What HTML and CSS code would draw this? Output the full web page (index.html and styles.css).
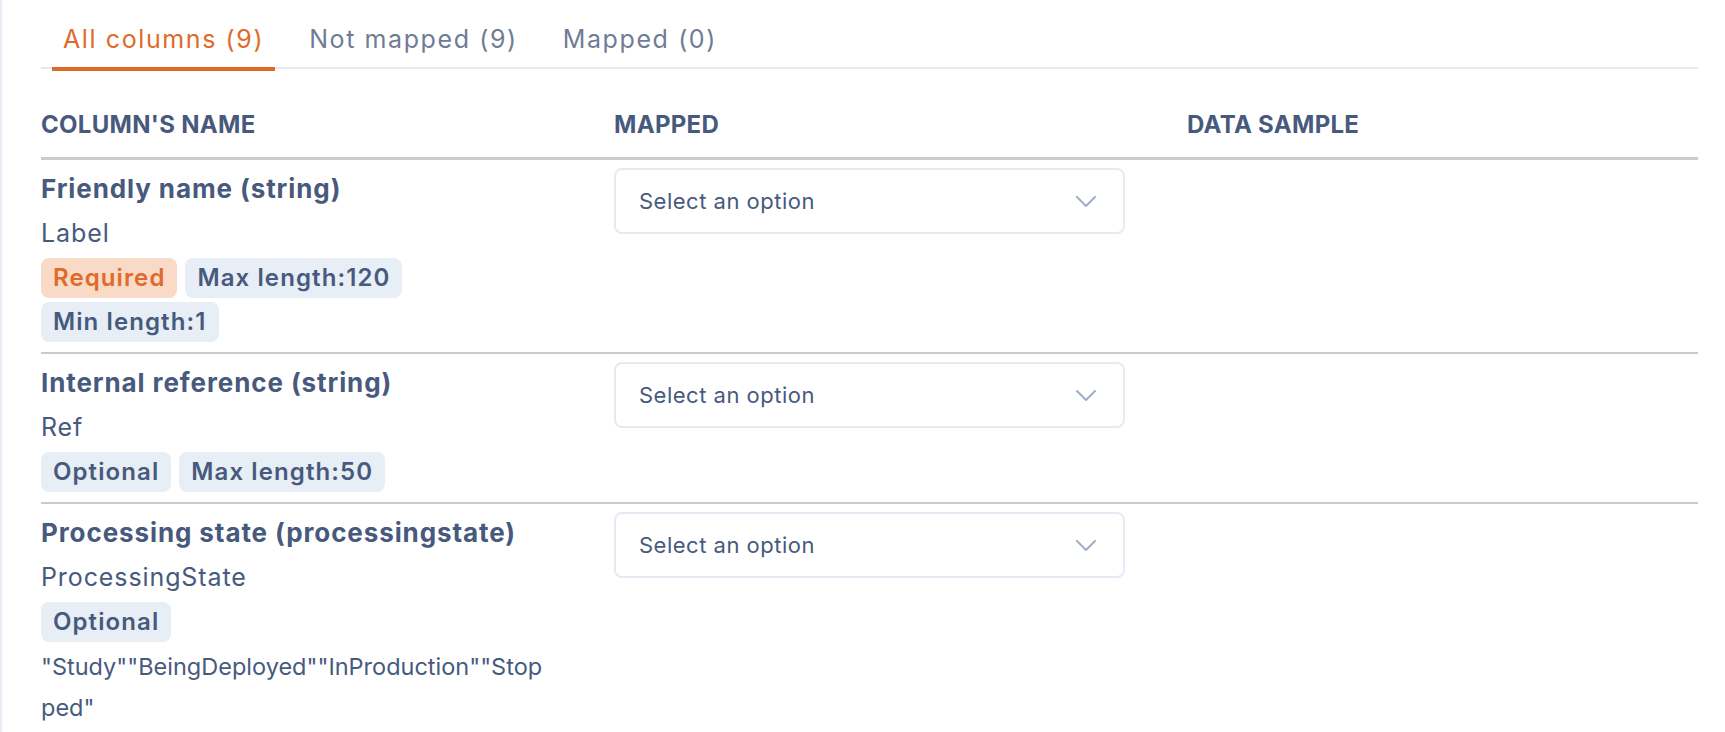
FILE: index.html
```html
<!DOCTYPE html>
<html lang="en">
<head>
<meta charset="utf-8">
<title>Column mapping</title>
<link rel="stylesheet" href="styles.css">
</head>
<body>
<div class="page">
  <nav class="tabs">
    <a class="tab active">All columns (9)</a>
    <a class="tab">Not mapped (9)</a>
    <a class="tab">Mapped (0)</a>
  </nav>
  <div class="table">
    <div class="row head">
      <div class="cell">COLUMN'S NAME</div>
      <div class="cell">MAPPED</div>
      <div class="cell">DATA SAMPLE</div>
    </div>

    <div class="row">
      <div class="cell name">
        <div class="title">Friendly name (string)</div>
        <div class="sub">Label</div>
        <div class="badges">
          <span class="badge req">Required</span>
          <span class="badge">Max length:120</span>
          <span class="badge">Min length:1</span>
        </div>
      </div>
      <div class="cell">
        <div class="select">
          <span>Select an option</span>
          <svg class="chev" width="20" height="11" viewBox="0 0 20 11"><path d="M1 1 L10 10 L19 1" fill="none" stroke="#9eaec6" stroke-width="2" stroke-linecap="round" stroke-linejoin="round"/></svg>
        </div>
      </div>
      <div class="cell"></div>
    </div>

    <div class="row">
      <div class="cell name">
        <div class="title">Internal reference (string)</div>
        <div class="sub">Ref</div>
        <div class="badges">
          <span class="badge">Optional</span>
          <span class="badge">Max length:50</span>
        </div>
      </div>
      <div class="cell">
        <div class="select">
          <span>Select an option</span>
          <svg class="chev" width="20" height="11" viewBox="0 0 20 11"><path d="M1 1 L10 10 L19 1" fill="none" stroke="#9eaec6" stroke-width="2" stroke-linecap="round" stroke-linejoin="round"/></svg>
        </div>
      </div>
      <div class="cell"></div>
    </div>

    <div class="row last">
      <div class="cell name">
        <div class="title">Processing state (processingstate)</div>
        <div class="sub">ProcessingState</div>
        <div class="badges">
          <span class="badge">Optional</span>
        </div>
        <div class="values">"Study""BeingDeployed""InProduction""Stopped"</div>
      </div>
      <div class="cell">
        <div class="select">
          <span>Select an option</span>
          <svg class="chev" width="20" height="11" viewBox="0 0 20 11"><path d="M1 1 L10 10 L19 1" fill="none" stroke="#9eaec6" stroke-width="2" stroke-linecap="round" stroke-linejoin="round"/></svg>
        </div>
      </div>
      <div class="cell"></div>
    </div>
  </div>
</div>
</body>
</html>
```
FILE: styles.css
```css
* { box-sizing: border-box; }
html, body { margin: 0; padding: 0; background: #ffffff; }
body {
  font-family: "Inter", "Noto Sans", sans-serif;
  color: #475a7d;
}
.page {
  height: 732px;
  border-left: 2px solid #e8edf5;
  padding: 0 27px 0 39px;
  overflow: hidden;
}
.tabs {
  display: flex;
  gap: 23px;
  padding-left: 11px;
  border-bottom: 2px solid #e4eaf4;
}
.tab {
  position: relative;
  padding: 22px 11px 11px;
  font-size: 25px;
  line-height: 34px;
  letter-spacing: 1.6px;
  color: #6f7c96;
  white-space: nowrap;
}
.tab.active { color: #e06a2a; }
.tab.active::after {
  content: "";
  position: absolute;
  left: 0;
  right: 0;
  bottom: -4px;
  height: 4px;
  background: #dd6a2b;
}
.row {
  display: grid;
  grid-template-columns: 573px 573px 1fr;
  padding: 8px 0 10px;
  border-bottom: 2px solid #cccccc;
}
.row.last { border-bottom: none; }
.row.head {
  padding: 39px 0 15px;
  border-bottom: 3px solid #cccccc;
  font-weight: 700;
  font-size: 24px;
  line-height: 34px;
  letter-spacing: 0.3px;
}
.cell.name { max-width: 520px; }
.title {
  font-weight: 700;
  font-size: 26px;
  line-height: 42px;
  letter-spacing: 0.9px;
  white-space: nowrap;
}
.sub {
  margin-top: 2px;
  font-size: 25px;
  line-height: 42px;
  letter-spacing: 0.9px;
}
.badges {
  display: flex;
  flex-wrap: wrap;
  gap: 4px 8px;
  margin-top: 4px;
  max-width: 510px;
}
.badge {
  display: inline-block;
  height: 40px;
  line-height: 40px;
  padding: 0 12px;
  border-radius: 8px;
  background: #e8eef6;
  font-weight: 600;
  font-size: 24px;
  letter-spacing: 1.1px;
  white-space: nowrap;
}
.badge.req {
  background: #f8dac6;
  color: #df6a2c;
}
.values {
  margin-top: 4px;
  max-width: 505px;
  font-size: 23.5px;
  line-height: 41px;
  letter-spacing: 0;
  word-break: break-all;
}
.select {
  width: 511px;
  height: 66px;
  border: 2px solid #e5eaf4;
  border-radius: 8px;
  padding: 0 27px 0 23px;
  display: flex;
  align-items: center;
  justify-content: space-between;
  font-size: 22px;
  letter-spacing: 0.5px;
  color: #475a7d;
}
.chev { display: block; }
```
